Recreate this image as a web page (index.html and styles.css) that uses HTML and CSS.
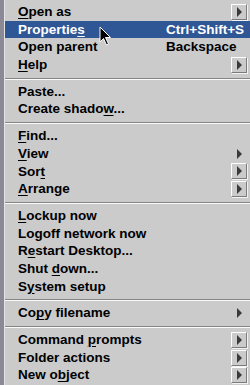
FILE: index.html
```html
<!DOCTYPE html>
<html>
  <head>
    <title>Context menu</title>
    <link rel="stylesheet" href="styles.css">
  </head>
  <body>
    <div class="desk">
      <div class="menu">
        <div class="item"><span class="label"><u>O</u>pen as</span><span></span><span class="sub box"><i></i></span></div>
        <div class="item active"><span class="label">Propertie<u>s</u></span><span class="key">Ctrl+Shift+S</span><span></span></div>
        <div class="item"><span class="label">Open parent</span><span class="key">Backspace</span><span></span></div>
        <div class="item"><span class="label"><u>H</u>elp</span><span></span><span class="sub box"><i></i></span></div>
        <div class="sep"></div>
        <div class="item"><span class="label">Paste...</span><span></span><span></span></div>
        <div class="item"><span class="label">Create shado<u>w</u>...</span><span></span><span></span></div>
        <div class="sep"></div>
        <div class="item"><span class="label"><u>F</u>ind...</span><span></span><span></span></div>
        <div class="item"><span class="label"><u>V</u>iew</span><span></span><span class="sub"><i></i></span></div>
        <div class="item"><span class="label">Sor<u>t</u></span><span></span><span class="sub box"><i></i></span></div>
        <div class="item"><span class="label"><u>A</u>rrange</span><span></span><span class="sub box"><i></i></span></div>
        <div class="sep"></div>
        <div class="item"><span class="label"><u>L</u>ockup now</span><span></span><span></span></div>
        <div class="item"><span class="label">Logoff network now</span><span></span><span></span></div>
        <div class="item"><span class="label">R<u>e</u>start Desktop...</span><span></span><span></span></div>
        <div class="item"><span class="label">Shut <u>d</u>own...</span><span></span><span></span></div>
        <div class="item"><span class="label">S<u>y</u>stem setup</span><span></span><span></span></div>
        <div class="sep"></div>
        <div class="item"><span class="label">Co<u>p</u>y filename</span><span></span><span class="sub"><i></i></span></div>
        <div class="sep"></div>
        <div class="item"><span class="label">Command <u>p</u>rompts</span><span></span><span class="sub box"><i></i></span></div>
        <div class="item"><span class="label">Folder actions</span><span></span><span class="sub box"><i></i></span></div>
        <div class="item"><span class="label">New o<u>b</u>ject</span><span></span><span class="sub box"><i></i></span></div>
      </div>
      <svg class="cursor" width="14" height="21" viewBox="0 0 14 21">
        <path d="M1 1 L1 16 L4.5 12.5 L7.5 19 L9.5 18 L6.5 11.5 L11.5 11.5 Z" fill="#000" stroke="#fff" stroke-width="1"/>
      </svg>
    </div>
  </body>
</html>
```

FILE: styles.css
```css
html, body {
  margin: 0;
  height: 100%;
  overflow: hidden;
}
body {
  background: #8c8997;
  font-family: "Liberation Sans", Arial, sans-serif;
  font-weight: bold;
  font-size: 13.5px;
  color: #000;
}
.desk {
  position: relative;
  padding-left: 4px;
  height: 100%;
}
.menu {
  background: #cbcbcb;
  border-left: 1px solid #e4e4e4;
  height: 100%;
  padding-top: 3px;
}
.item {
  display: grid;
  grid-template-columns: 148px 1fr 16px;
  align-items: center;
  height: 17.7px;
  line-height: 17.7px;
  padding-left: 13px;
  padding-right: 3px;
  white-space: nowrap;
}
.item.active {
  background: #2f5795;
  color: #fff;
}
u {
  text-decoration-thickness: 1px;
  text-underline-offset: 2px;
}
.sub {
  display: flex;
  align-items: center;
  justify-content: center;
  width: 16px;
  height: 16px;
  box-sizing: border-box;
}
.sub.box {
  border: 1px solid;
  border-color: #fff #7c7c7c #7c7c7c #fff;
  box-shadow: 1px 1px 0 #f2f2f2;
}
.sub i {
  width: 0;
  height: 0;
  border-top: 5px solid transparent;
  border-bottom: 5px solid transparent;
  border-left: 5px solid #3a3a3a;
  margin-left: 1px;
}
.sep {
  height: 1px;
  background: #858585;
  border-bottom: 1px solid #fafafa;
  margin: 4px 0 3px;
}
.cursor {
  position: absolute;
  left: 99px;
  top: 26px;
}
```
